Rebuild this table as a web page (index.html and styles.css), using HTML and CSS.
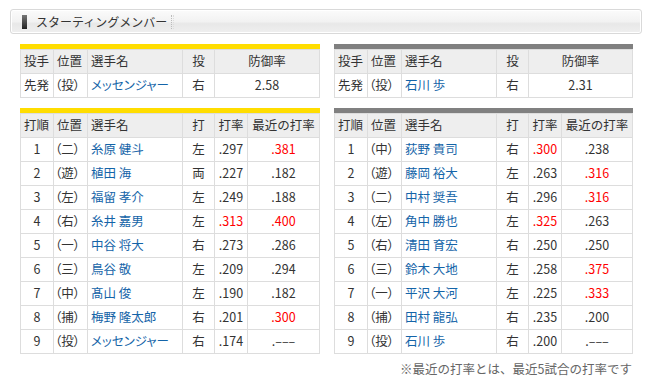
FILE: index.html
```html
<!DOCTYPE html>
<html lang="ja">
<head>
<meta charset="utf-8">
<title>スターティングメンバー</title>
<link rel="stylesheet" href="styles.css">
</head>
<body>
<div class="page">
  <div class="titlebar">
    <span class="mark"></span>
    <h2 class="title">スターティングメンバー</h2>
    <span class="sep"></span>
  </div>
  <div class="teams">
    <div class="team">
      <div class="block bar-yellow">
        <table class="tbl">
          <colgroup><col class="c-a"><col class="c-b"><col class="c-c"><col class="c-d"><col></colgroup>
          <tr class="head"><th class="l">投手</th><th class="l">位置</th><th class="l">選手名</th><th>投</th><th>防御率</th></tr>
          <tr><td class="l">先発</td><td class="pos">（投）</td><td class="l"><a class="name">メッセンジャー</a></td><td>右</td><td class="num">2.58</td></tr>
        </table>
      </div>
      <div class="block bar-yellow">
        <table class="tbl">
          <colgroup><col class="c-a"><col class="c-b"><col class="c-c"><col class="c-d"><col class="c-e"><col></colgroup>
          <tr class="head"><th class="l">打順</th><th class="l">位置</th><th class="l">選手名</th><th>打</th><th>打率</th><th>最近の打率</th></tr>
          <tr><td class="num">1</td><td class="pos">（二）</td><td class="l"><a class="name">糸原 健斗</a></td><td>左</td><td class="num">.297</td><td class="num red">.381</td></tr>
          <tr><td class="num">2</td><td class="pos">（遊）</td><td class="l"><a class="name">植田 海</a></td><td>両</td><td class="num">.227</td><td class="num">.182</td></tr>
          <tr><td class="num">3</td><td class="pos">（左）</td><td class="l"><a class="name">福留 孝介</a></td><td>左</td><td class="num">.249</td><td class="num">.188</td></tr>
          <tr><td class="num">4</td><td class="pos">（右）</td><td class="l"><a class="name">糸井 嘉男</a></td><td>左</td><td class="num red">.313</td><td class="num red">.400</td></tr>
          <tr><td class="num">5</td><td class="pos">（一）</td><td class="l"><a class="name">中谷 将大</a></td><td>右</td><td class="num">.273</td><td class="num">.286</td></tr>
          <tr><td class="num">6</td><td class="pos">（三）</td><td class="l"><a class="name">鳥谷 敬</a></td><td>左</td><td class="num">.209</td><td class="num">.294</td></tr>
          <tr><td class="num">7</td><td class="pos">（中）</td><td class="l"><a class="name">髙山 俊</a></td><td>左</td><td class="num">.190</td><td class="num">.182</td></tr>
          <tr><td class="num">8</td><td class="pos">（捕）</td><td class="l"><a class="name">梅野 隆太郎</a></td><td>右</td><td class="num">.201</td><td class="num red">.300</td></tr>
          <tr><td class="num">9</td><td class="pos">（投）</td><td class="l"><a class="name">メッセンジャー</a></td><td>右</td><td class="num">.174</td><td class="num">.‒‒‒</td></tr>
        </table>
      </div>
    </div>
    <div class="team">
      <div class="block bar-gray">
        <table class="tbl">
          <colgroup><col class="c-a"><col class="c-b"><col class="c-c"><col class="c-d"><col></colgroup>
          <tr class="head"><th class="l">投手</th><th class="l">位置</th><th class="l">選手名</th><th>投</th><th>防御率</th></tr>
          <tr><td class="l">先発</td><td class="pos">（投）</td><td class="l"><a class="name">石川 歩</a></td><td>右</td><td class="num">2.31</td></tr>
        </table>
      </div>
      <div class="block bar-gray">
        <table class="tbl">
          <colgroup><col class="c-a"><col class="c-b"><col class="c-c"><col class="c-d"><col class="c-e"><col></colgroup>
          <tr class="head"><th class="l">打順</th><th class="l">位置</th><th class="l">選手名</th><th>打</th><th>打率</th><th>最近の打率</th></tr>
          <tr><td class="num">1</td><td class="pos">（中）</td><td class="l"><a class="name">荻野 貴司</a></td><td>右</td><td class="num red">.300</td><td class="num">.238</td></tr>
          <tr><td class="num">2</td><td class="pos">（遊）</td><td class="l"><a class="name">藤岡 裕大</a></td><td>左</td><td class="num">.263</td><td class="num red">.316</td></tr>
          <tr><td class="num">3</td><td class="pos">（二）</td><td class="l"><a class="name">中村 奨吾</a></td><td>右</td><td class="num">.296</td><td class="num red">.316</td></tr>
          <tr><td class="num">4</td><td class="pos">（左）</td><td class="l"><a class="name">角中 勝也</a></td><td>左</td><td class="num red">.325</td><td class="num">.263</td></tr>
          <tr><td class="num">5</td><td class="pos">（右）</td><td class="l"><a class="name">清田 育宏</a></td><td>右</td><td class="num">.250</td><td class="num">.250</td></tr>
          <tr><td class="num">6</td><td class="pos">（三）</td><td class="l"><a class="name">鈴木 大地</a></td><td>左</td><td class="num">.258</td><td class="num red">.375</td></tr>
          <tr><td class="num">7</td><td class="pos">（一）</td><td class="l"><a class="name">平沢 大河</a></td><td>左</td><td class="num">.225</td><td class="num red">.333</td></tr>
          <tr><td class="num">8</td><td class="pos">（捕）</td><td class="l"><a class="name">田村 龍弘</a></td><td>右</td><td class="num">.235</td><td class="num">.200</td></tr>
          <tr><td class="num">9</td><td class="pos">（投）</td><td class="l"><a class="name">石川 歩</a></td><td>右</td><td class="num">.200</td><td class="num">.‒‒‒</td></tr>
        </table>
      </div>
    </div>
  </div>
  <p class="note">※最近の打率とは、最近5試合の打率です</p>
</div>
</body>
</html>
```

FILE: styles.css
```css
html, body {
  margin: 0;
  padding: 0;
  background: #ffffff;
}

body {
  font-family: "Noto Sans CJK JP", "Noto Sans", sans-serif;
  font-size: 12.5px;
  color: #333333;
}

.page {
  padding: 9px 7px 0 10px;
}

.titlebar {
  display: flex;
  align-items: center;
  height: 23px;
  border: 1px solid #d9d9d9;
  border-radius: 3px;
  box-shadow: inset 0 0 0 1px #ffffff;
  background: linear-gradient(#fbfbfb 0%, #f2f2f2 50%, #e8e8e8 60%, #efefef 100%);
  padding-left: 11px;
}

.mark {
  width: 5px;
  height: 14px;
  background: linear-gradient(#777777, #222222);
}

.title {
  margin: 0 0 0 9px;
  font-size: 12px;
  font-weight: normal;
  color: #333333;
  line-height: 1;
}

.sep {
  width: 1px;
  height: 14px;
  margin-left: 4px;
  border-left: 1px dotted #bbbbbb;
  border-right: 1px dotted #dddddd;
}

.teams {
  display: grid;
  grid-template-columns: 300px 299px;
  column-gap: 14px;
  margin: 10px 0 0 10px;
}

.team {
  display: flex;
  flex-direction: column;
  gap: 10px;
}

.block {
  border-top: 5px solid #ffdd00;
}

.bar-yellow {
  border-top-color: #ffdd00;
}

.bar-gray {
  border-top-color: #808080;
}

.tbl {
  width: 100%;
  table-layout: fixed;
  border-collapse: collapse;
}

.c-a { width: 33px; }
.c-b { width: 34px; }
.c-c { width: 95px; }
.c-d { width: 32px; }
.c-e { width: 33px; }

.tbl th,
.tbl td {
  height: 23px;
  padding: 0 3px;
  border: 1px solid #dddddd;
  text-align: center;
  vertical-align: middle;
  white-space: nowrap;
  overflow: hidden;
  font-weight: normal;
  line-height: 1;
}

.tbl tr.head th {
  background: #eeeeee;
}

.tbl .l {
  text-align: left;
}

.tbl .pos {
  text-align: left;
  padding-left: 1px;
  font-feature-settings: "palt";
}

.name {
  color: #1464a8;
  text-decoration: none;
  font-feature-settings: "palt";
}

.num {
  font-size: 12.5px;
}

.red {
  color: #ff0000;
}

.note {
  margin: 5px 10px 0 0;
  text-align: right;
  font-size: 12.5px;
  color: #666666;
}
```
